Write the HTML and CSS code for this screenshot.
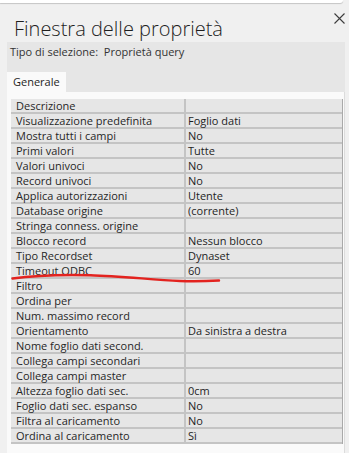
FILE: index.html
```html
<!doctype html>
<html lang="it">
<head>
    <meta charset="UTF-8">
    <title>Finestra delle proprietà</title>
    <link rel="stylesheet" href="styles.css">
</head>
<body>
    <div id="topbar"></div>
    <div id="head">
        <h1>Finestra delle proprietà</h1>
        <span class="close">
            <svg width="11" height="11" viewBox="0 0 11 11"><path d="M0.5 0.5 L10.5 10.5 M10.5 0.5 L0.5 10.5" stroke="#3c3c3c" stroke-width="1.1" fill="none"/></svg>
        </span>
    </div>
    <div id="sheet">
        <div class="selband">
            <p class="seltype">Tipo di selezione:&nbsp; Proprietà query</p>
            <ul class="tabs">
                <li class="on">Generale</li>
            </ul>
        </div>
        <div class="panel">
            <div class="grid">
                <div class="row"><span class="k">Descrizione</span><span class="v"></span></div>
                <div class="row"><span class="k">Visualizzazione predefinita</span><span class="v">Foglio dati</span></div>
                <div class="row"><span class="k">Mostra tutti i campi</span><span class="v">No</span></div>
                <div class="row"><span class="k">Primi valori</span><span class="v">Tutte</span></div>
                <div class="row"><span class="k">Valori univoci</span><span class="v">No</span></div>
                <div class="row"><span class="k">Record univoci</span><span class="v">No</span></div>
                <div class="row"><span class="k">Applica autorizzazioni</span><span class="v">Utente</span></div>
                <div class="row"><span class="k">Database origine</span><span class="v">(corrente)</span></div>
                <div class="row"><span class="k">Stringa conness. origine</span><span class="v"></span></div>
                <div class="row"><span class="k">Blocco record</span><span class="v">Nessun blocco</span></div>
                <div class="row"><span class="k">Tipo Recordset</span><span class="v">Dynaset</span></div>
                <div class="row"><span class="k">Timeout ODBC</span><span class="v">60</span></div>
                <div class="row"><span class="k">Filtro</span><span class="v"></span></div>
                <div class="row"><span class="k">Ordina per</span><span class="v"></span></div>
                <div class="row"><span class="k">Num. massimo record</span><span class="v"></span></div>
                <div class="row"><span class="k">Orientamento</span><span class="v">Da sinistra a destra</span></div>
                <div class="row"><span class="k">Nome foglio dati second.</span><span class="v"></span></div>
                <div class="row"><span class="k">Collega campi secondari</span><span class="v"></span></div>
                <div class="row"><span class="k">Collega campi master</span><span class="v"></span></div>
                <div class="row"><span class="k">Altezza foglio dati sec.</span><span class="v">0cm</span></div>
                <div class="row"><span class="k">Foglio dati sec. espanso</span><span class="v">No</span></div>
                <div class="row"><span class="k">Filtra al caricamento</span><span class="v">No</span></div>
                <div class="row"><span class="k">Ordina al caricamento</span><span class="v">Sì</span></div>
            </div>
        </div>
    </div>
    <!-- segno a mano sopra la riga del timeout -->
    <svg class="mark" width="349" height="453" viewBox="0 0 349 453">
        <path d="M12.5 278.5 C30 276, 60 274.5, 90 275.2 C120 276, 150 279.5, 180 281 C195 281.5, 210 281, 219 280.5" stroke="#e3231f" stroke-width="2.4" fill="none" stroke-linecap="round"/>
    </svg>
</body>
</html>
```

FILE: styles.css
```css
*{
    margin:0;
    padding:0;
}
ul{
    list-style: none;
}
body{
    width:349px;
    height:453px;
    overflow:hidden;
    background-color: #f0f0f0;
    font-family: "Segoe UI", "Open Sans", sans-serif;
    font-size:11px;
    color:#262626;
}
#topbar{
    height:3px;
    margin-right:6px;
    background-color: #fff;
    border-bottom-right-radius:3px;
    box-shadow: 0 1px 1px rgba(0,0,0,0.18);
}
#head{
    display:flex;
    justify-content: space-between;
    align-items: flex-start;
    height:39px;
    padding-left:14px;
    padding-right:4px;
}
#head h1{
    font-family: "Segoe UI Light", "Open Sans", sans-serif;
    font-weight:300;
    font-size:20px;
    line-height:26px;
    margin-top:13px;
    color:#1e1e1e;
}
#head .close{
    margin-top:9px;
    display:block;
}
#sheet{
    margin-left:7px;
    width:338px;
}
.selband{
    height:50px;
    background-color: #e6e6e6;
    display:flex;
    flex-direction: column;
    justify-content: space-between;
}
.seltype{
    padding-left:3px;
    padding-top:2px;
    line-height:15px;
    color:#333;
}
.tabs{
    display:flex;
}
.tabs li{
    height:20px;
    line-height:20px;
    padding:0 6px 0 6px;
    background-color: #fafafa;
    color:#1e1e1e;
}
.panel{
    height:361px;
    background-color: #fafafa;
    padding:7px 1px 0 4px;
    border-right:1px solid #dcdcdc;
    box-sizing: border-box;
}
.grid{
    border-right:1px solid #a9a9a9;
}
.row{
    display:flex;
    height:13px;
    line-height:13px;
    border-bottom:2px solid #c4c4c4;
    background-color: #e6e6e6;
    white-space: nowrap;
}
.row .k{
    width:168px;
    padding-left:5px;
    border-right:2px solid #c4c4c4;
}
.row .v{
    flex:1;
    padding-left:2px;
    color:#1e1e1e;
}
.mark{
    position:absolute;
    left:0;
    top:0;
    pointer-events: none;
}
```
